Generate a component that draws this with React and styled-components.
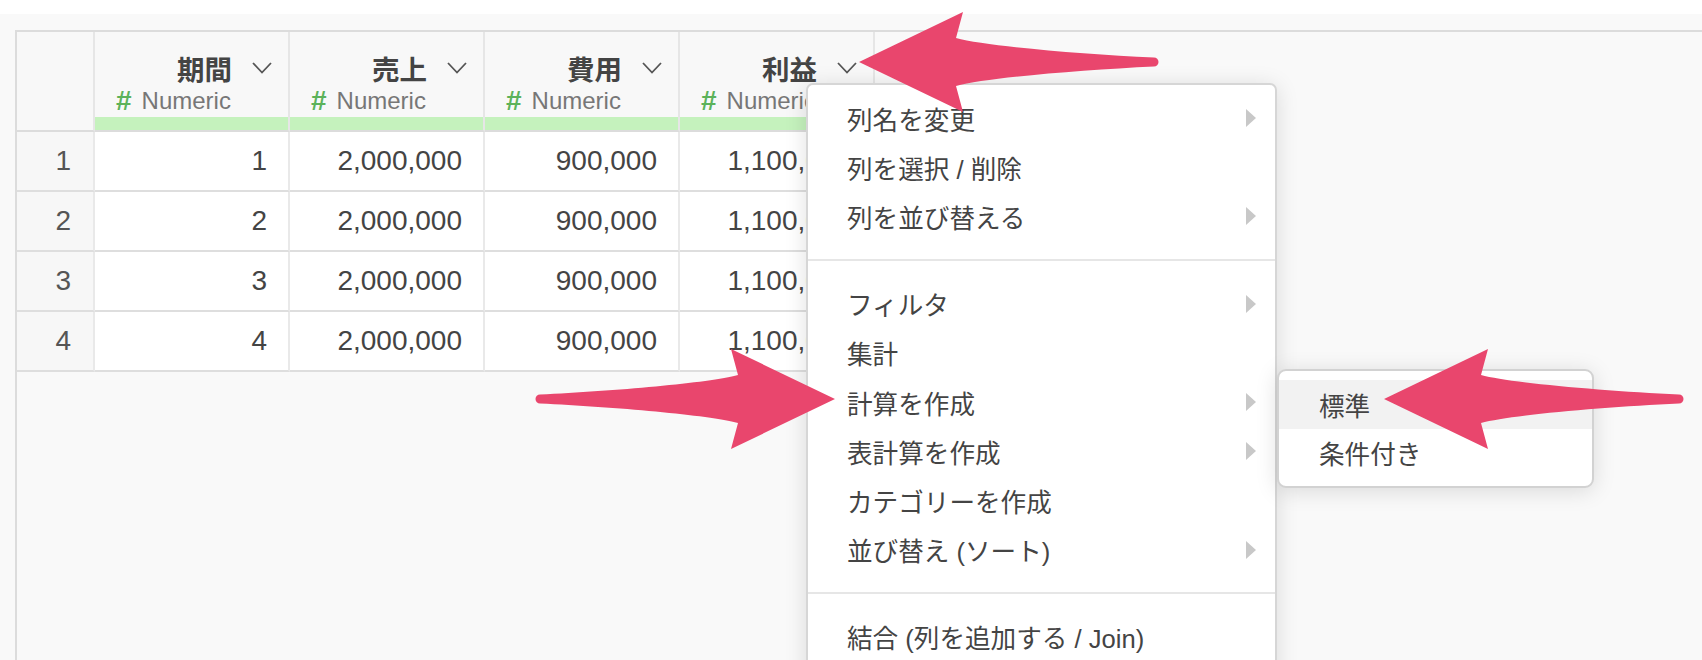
import React from 'react';
import styled, { createGlobalStyle } from 'styled-components';

const GlobalStyle = createGlobalStyle`
  html, body { margin: 0; padding: 0; height: 100%; overflow: hidden; background: #fff; }
  body { font-family: "Liberation Sans", "Noto Sans CJK JP", sans-serif; color: #444; }
  #root { height: 100%; }
  * { box-sizing: border-box; }
`;

const Page = styled.div`
  position: relative;
  height: 100vh;
  display: flex;
  flex-direction: column;
  overflow: hidden;
`;

const TopStrip = styled.div`
  flex: none;
  height: 14px;
  background: #fff;
`;

const Workspace = styled.div`
  flex: 1;
  display: flex;
  background: #f9f9f9;
  padding: 16px 0 0 15px;
`;

const Frame = styled.div`
  flex: 1;
  border-top: 2px solid #dcdcdc;
  border-left: 2px solid #dcdcdc;
`;

const Grid = styled.div`
  display: grid;
  grid-template-columns: 78px repeat(4, 195px);
  grid-template-rows: 100px;
  grid-auto-rows: 60px;
`;

const HeaderCorner = styled.div`
  background: #f8f8f8;
  border-right: 2px solid #e6e6e6;
  border-bottom: 2px solid #dcdcdc;
`;

const HeaderCell = styled.div`
  display: flex;
  flex-direction: column;
  background: #f8f8f8;
  border-right: 2px solid #e6e6e6;
  border-bottom: 2px solid #dcdcdc;
`;

const TitleRow = styled.div`
  display: flex;
  align-items: center;
  justify-content: flex-end;
  gap: 20px;
  height: 32px;
  margin-top: 20px;
  padding-right: 16px;
`;

const Title = styled.span`
  font-family: "Noto Sans CJK JP", sans-serif;
  font-weight: 700;
  font-size: 27.5px;
  line-height: 32px;
  color: #444;
`;

const TypeRow = styled.div`
  display: flex;
  align-items: center;
  height: 28px;
  margin-top: 3px;
  padding-left: 21px;
  font-size: 24px;
  line-height: 28px;
  color: #777;
  white-space: nowrap;
`;

const Hash = styled.span`
  font-weight: 700;
  font-size: 28px;
  line-height: 28px;
  color: #5cb25a;
  margin-right: 10px;
`;

const TypeBar = styled.div`
  margin-top: auto;
  height: 13px;
  background: #c5f2bd;
`;

const Cell = styled.div`
  display: flex;
  align-items: center;
  justify-content: flex-end;
  padding-right: ${p => (p.$index ? 22 : 21)}px;
  background: ${p => (p.$index ? '#f7f7f7' : '#fff')};
  color: ${p => (p.$index ? '#555' : '#444')};
  border-right: 2px solid #e9e9e9;
  border-bottom: 2px solid #dedede;
  font-size: 28px;
`;

const Menu = styled.div`
  position: absolute;
  left: 806px;
  top: 83px;
  width: 471px;
  height: 620px;
  background: #fff;
  border: 2px solid #d6d6d6;
  border-radius: 7px;
  padding: 8.5px 0;
  box-shadow: 0 3px 22px rgba(0, 0, 0, 0.13);
  z-index: 2;
`;

const MenuItem = styled.div`
  display: flex;
  align-items: center;
  justify-content: space-between;
  height: 49.2px;
  padding: 0 19px 0 39px;
  font-size: 25.6px;
  color: #444;
  white-space: nowrap;
`;

const Caret = styled.span`
  width: 0;
  height: 0;
  border-top: 9px solid transparent;
  border-bottom: 9px solid transparent;
  border-left: 10px solid #c8c8c8;
`;

const Separator = styled.div`
  height: 2px;
  margin: 18px 0;
  background: #e6e6e6;
`;

const SubMenu = styled.div`
  position: absolute;
  left: 1277px;
  top: 369px;
  width: 317px;
  background: #fff;
  border: 2px solid #d2d2d2;
  border-radius: 9px;
  padding: 9px 0;
  box-shadow: 0 3px 22px rgba(0, 0, 0, 0.13);
  z-index: 3;
`;

const SubItem = styled.div`
  display: flex;
  align-items: center;
  height: 48.5px;
  padding-left: 40px;
  font-size: 25.6px;
  color: #444;
  background: ${p => (p.$active ? '#f2f2f2' : 'transparent')};
`;

const Overlay = styled.svg`
  position: absolute;
  left: 0;
  top: 0;
  z-index: 5;
  pointer-events: none;
`;

const Chevron = () => (
  <svg width="20" height="12" viewBox="0 0 20 12">
    <polyline points="1,1 10,10.5 19,1" fill="none" stroke="#555" strokeWidth="1.8" />
  </svg>
);

const columns = ['期間', '売上', '費用', '利益'];
const rows = [
  ['1', '2,000,000', '900,000', '1,100,000'],
  ['2', '2,000,000', '900,000', '1,100,000'],
  ['3', '2,000,000', '900,000', '1,100,000'],
  ['4', '2,000,000', '900,000', '1,100,000'],
];

const menuGroups = [
  [
    { label: '列名を変更', sub: true },
    { label: '列を選択 / 削除' },
    { label: '列を並び替える', sub: true },
  ],
  [
    { label: 'フィルタ', sub: true },
    { label: '集計' },
    { label: '計算を作成', sub: true },
    { label: '表計算を作成', sub: true },
    { label: 'カテゴリーを作成' },
    { label: '並び替え (ソート)', sub: true },
  ],
  [{ label: '結合 (列を追加する / Join)' }],
];

const ARROW =
  'M0,0 L104,-50 L97,-24 C126,-16 221,-8 295,-4.5 A4.5,4.5 0 0 1 295,4.5 C221,8 126,16 97,24 L104,50 Z';

export default function App() {
  return (
    <Page>
      <GlobalStyle />
      <TopStrip />
      <Workspace>
        <Frame>
          <Grid>
            <HeaderCorner />
            {columns.map(c => (
              <HeaderCell key={c}>
                <TitleRow>
                  <Title>{c}</Title>
                  <Chevron />
                </TitleRow>
                <TypeRow>
                  <Hash>#</Hash>Numeric
                </TypeRow>
                <TypeBar />
              </HeaderCell>
            ))}
            {rows.map((r, i) => (
              <React.Fragment key={i}>
                <Cell $index>{i + 1}</Cell>
                {r.map((v, j) => (
                  <Cell key={j}>{v}</Cell>
                ))}
              </React.Fragment>
            ))}
          </Grid>
        </Frame>
      </Workspace>

      <Menu>
        {menuGroups.map((g, gi) => (
          <React.Fragment key={gi}>
            {gi > 0 && <Separator />}
            {g.map(item => (
              <MenuItem key={item.label}>
                <span>{item.label}</span>
                {item.sub && <Caret />}
              </MenuItem>
            ))}
          </React.Fragment>
        ))}
      </Menu>

      <SubMenu>
        <SubItem $active>標準</SubItem>
        <SubItem>条件付き</SubItem>
      </SubMenu>

      <Overlay width="1702" height="660" viewBox="0 0 1702 660">
        <g fill="#e9466d">
          <path d={ARROW} transform="translate(859 62)" />
          <path d={ARROW} transform="translate(835 399) scale(-1 1)" />
          <path d={ARROW} transform="translate(1384 399)" />
        </g>
      </Overlay>
    </Page>
  );
}
